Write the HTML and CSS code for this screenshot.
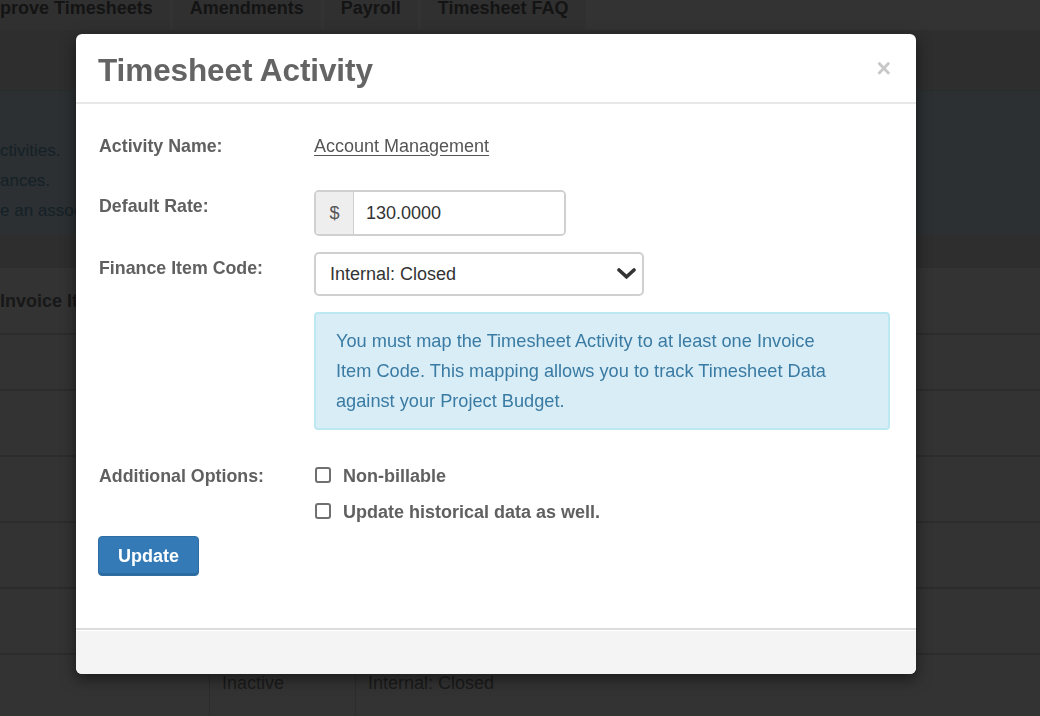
FILE: index.html
```html
<!DOCTYPE html>
<html lang="en">
<head>
<meta charset="utf-8">
<title>Timesheet Activity</title>
<link rel="stylesheet" href="styles.css">
</head>
<body>
<div class="page">
  <nav class="tabs">
    <a class="tab first">Approve Timesheets</a>
    <a class="tab">Amendments</a>
    <a class="tab">Payroll</a>
    <a class="tab">Timesheet FAQ</a>
  </nav>
  <div class="subbar"></div>
  <div class="notice">
    <p class="notice-line"><span class="cut"><span>Use this page to manage your timesheet a</span></span>ctivities.</p>
    <p class="notice-line"><span class="cut"><span>Activities are used for time entries and allow</span></span>ances.</p>
    <p class="notice-line"><span class="cut"><span>Each activity must hav</span></span>e an associated Invoice Item Code.</p>
  </div>
  <div class="band"></div>
  <div class="list">
    <div class="list-head"><div class="cell">Invoice Item Code</div><div class="cell">Status</div><div class="cell">Finance Item Code</div></div>
    <div class="list-row short"><div class="cell"></div><div class="cell"></div><div class="cell"></div></div>
    <div class="list-row"><div class="cell"></div><div class="cell"></div><div class="cell"></div></div>
    <div class="list-row"><div class="cell"></div><div class="cell"></div><div class="cell"></div></div>
    <div class="list-row"><div class="cell"></div><div class="cell"></div><div class="cell"></div></div>
    <div class="list-row"><div class="cell"></div><div class="cell"></div><div class="cell"></div></div>
    <div class="list-row"><div class="cell"></div><div class="cell">Inactive</div><div class="cell">Internal: Closed</div></div>
  </div>
</div>

<div class="backdrop"></div>

<div class="modal">
  <div class="modal-header">
    <h2 class="modal-title">Timesheet Activity</h2>
    <button class="close" type="button">×</button>
  </div>
  <div class="modal-body">
    <div class="row r1">
      <span class="lbl">Activity Name:</span>
      <div><a class="link">Account Management</a></div>
    </div>
    <div class="row">
      <span class="lbl">Default Rate:</span>
      <div class="igroup"><span class="addon">$</span><input class="ifield" type="text" value="130.0000"></div>
    </div>
    <div class="row">
      <span class="lbl">Finance Item Code:</span>
      <div class="select-wrap">
        <select class="select"><option>Internal: Closed</option></select>
        <svg class="chev" width="19" height="11" viewBox="0 0 19 11"><polyline points="2,2 9.5,8.8 17,2" fill="none" stroke="#333" stroke-width="3.6" stroke-linecap="round" stroke-linejoin="miter"/></svg>
      </div>
    </div>
    <div class="row">
      <span></span>
      <div class="alert">You must map the Timesheet Activity to at least one Invoice<br>Item Code. This mapping allows you to track Timesheet Data<br>against your Project Budget.</div>
    </div>
    <div class="row opts">
      <span class="lbl tall">Additional Options:</span>
      <div class="checks">
        <label class="check"><input type="checkbox" class="cb"><span>Non-billable</span></label>
        <label class="check"><input type="checkbox" class="cb"><span>Update historical data as well.</span></label>
      </div>
    </div>
    <button class="btn" type="button">Update</button>
  </div>
  <div class="modal-footer"></div>
</div>
</body>
</html>
```

FILE: styles.css
```css
html, body {
  margin: 0;
  padding: 0;
  height: 100%;
  overflow: hidden;
}
body {
  background: #ffffff;
  font-family: "Liberation Sans", Arial, Helvetica, sans-serif;
  color: #333;
}

/* ---------- underlying page ---------- */
.page {
  width: 1040px;
}
.tabs {
  display: flex;
  align-items: flex-start;
  height: 30px;
  margin-left: -41px;
  background: #ffffff;
}
.tab {
  display: block;
  height: 30px;
  padding: 0 17px;
  margin-right: 3px;
  background: #f0f0f0;
  color: #666;
  font-weight: bold;
  font-size: 18px;
  line-height: 16px;
  white-space: nowrap;
}
.subbar {
  height: 60px;
  background: #e6e6e6;
}
.notice {
  height: 145px;
  box-sizing: border-box;
  padding-top: 45px;
  background: #d9edf7;
  border-top: 1px solid #bce8f1;
  color: #6aa3c4;
  font-size: 17px;
}
.notice-line {
  margin: 0;
  display: flex;
  height: 30px;
  line-height: 30px;
  white-space: nowrap;
}
.cut {
  display: flex;
  justify-content: flex-end;
  width: 0;
}
.cut span {
  flex-shrink: 0;
}
.band {
  height: 33px;
  background: #e4e4e4;
}
.list {
  margin-left: -12px;
  font-size: 18px;
  color: #888;
}
.list-head {
  display: grid;
  grid-template-columns: 221px 146px 1fr;
  align-items: center;
  height: 65px;
  font-weight: bold;
  color: #787878;
  white-space: nowrap;
}
.list-row {
  display: grid;
  grid-template-columns: 221px 146px 1fr;
  height: 66px;
  box-sizing: border-box;
  border-top: 2px solid #dcdcdc;
}
.list-row.short {
  height: 56px;
}
.cell {
  padding: 0 12px;
  line-height: 20px;
  white-space: nowrap;
}
.list-row .cell {
  padding-top: 18px;
}
.list-row .cell + .cell {
  border-left: 1px solid #dcdcdc;
}

/* ---------- backdrop ---------- */
.backdrop {
  position: fixed;
  inset: 0;
  background: rgba(0, 0, 0, 0.8);
}

/* ---------- modal ---------- */
.modal {
  position: absolute;
  left: 76px;
  top: 34px;
  width: 840px;
  height: 640px;
  display: flex;
  flex-direction: column;
  background: #fff;
  border-radius: 6px;
  overflow: hidden;
  box-shadow: 0 5px 15px rgba(0, 0, 0, 0.5);
}
.modal-header {
  display: flex;
  justify-content: space-between;
  align-items: flex-start;
  padding: 18px 25px 14px 22px;
  border-bottom: 2px solid #e8e8e8;
}
.modal-title {
  margin: 0;
  font-size: 31.5px;
  line-height: 36px;
  font-weight: bold;
  color: #646464;
  letter-spacing: -0.1px;
}
.close {
  margin-top: -2px;
  padding: 0;
  border: 0;
  background: none;
  font-family: "Liberation Sans", Arial, sans-serif;
  font-size: 25px;
  line-height: 36px;
  font-weight: bold;
  color: #c8c8c8;
}
.modal-body {
  flex: 1;
  padding: 26px 26px 0 22px;
}
.row {
  display: grid;
  grid-template-columns: 216px 1fr;
  margin-bottom: 16px;
}
.r1 {
  min-height: 44px;
}
.lbl {
  padding-left: 1px;
  font-size: 17.8px;
  font-weight: bold;
  line-height: 32px;
  color: #606060;
  white-space: nowrap;
}
.lbl.tall {
  line-height: 36px;
}
.link {
  display: inline-block;
  font-size: 18px;
  line-height: 32px;
  color: #555;
  text-decoration: underline;
  text-underline-offset: 3px;
}
.igroup {
  display: flex;
  width: 252px;
  height: 46px;
  box-sizing: border-box;
  border: 2px solid #d0d0d0;
  border-radius: 5px;
  overflow: hidden;
}
.addon {
  display: flex;
  align-items: center;
  justify-content: center;
  width: 38px;
  box-sizing: border-box;
  border-right: 1px solid #d0d0d0;
  background: #eeeeee;
  font-size: 18px;
  color: #555;
}
.ifield {
  flex: 1;
  min-width: 0;
  border: 0;
  outline: none;
  padding: 0 12px;
  font-family: "Liberation Sans", Arial, sans-serif;
  font-size: 18px;
  color: #333;
  background: #fff;
}
.select-wrap {
  position: relative;
  width: 330px;
  height: 44px;
}
.select {
  appearance: none;
  -webkit-appearance: none;
  width: 330px;
  height: 44px;
  box-sizing: border-box;
  border: 2px solid #d0d0d0;
  border-radius: 5px;
  padding: 0 40px 0 14px;
  background: #fff;
  font-family: "Liberation Sans", Arial, sans-serif;
  font-size: 18px;
  color: #333;
}
.chev {
  position: absolute;
  right: 8px;
  top: 16px;
}
.alert {
  width: 576px;
  box-sizing: border-box;
  margin-bottom: 12px;
  padding: 12px 20px;
  background: #d9edf7;
  border: 2px solid #bce8f1;
  border-radius: 4px;
  font-size: 18.2px;
  line-height: 30px;
  color: #3a7ba3;
  white-space: nowrap;
}
.opts {
  margin-bottom: 6px;
}
.checks {
  display: flex;
  flex-direction: column;
}
.check {
  display: flex;
  align-items: center;
  height: 36px;
  font-size: 18px;
  font-weight: bold;
  color: #606060;
}
.cb {
  appearance: none;
  -webkit-appearance: none;
  width: 16px;
  height: 16px;
  box-sizing: border-box;
  margin: -2px 12px 0 1px;
  border: 2px solid #707070;
  border-radius: 3px;
  background: #fff;
}
.btn {
  display: block;
  height: 40px;
  padding: 0 19px;
  border: 1px solid #2e6da4;
  border-radius: 4px;
  background: #337ab7;
  box-shadow: inset 0 -2px 0 rgba(0, 0, 0, 0.12);
  font-family: "Liberation Sans", Arial, sans-serif;
  font-size: 18px;
  font-weight: bold;
  color: #fff;
}
.modal-footer {
  height: 46px;
  box-sizing: border-box;
  border-top: 2px solid #dcdcdc;
  box-shadow: inset 0 1px 0 #fff;
  background: #f4f4f4;
}
```
